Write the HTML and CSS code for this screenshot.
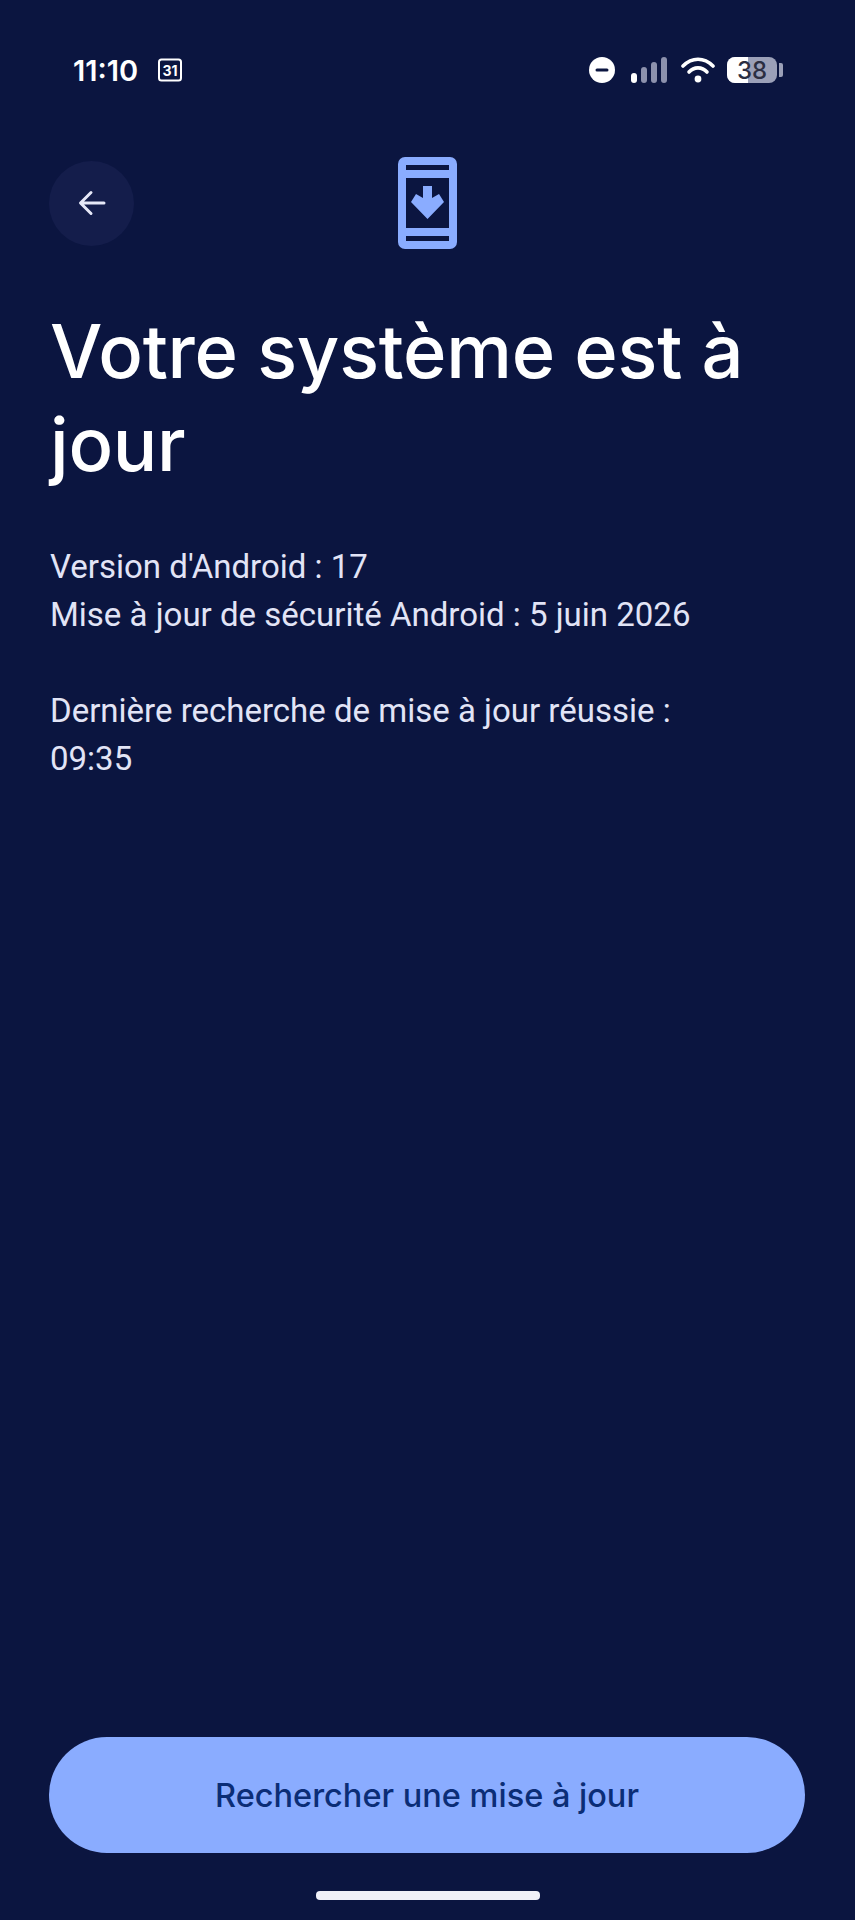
FILE: index.html
```html
<!DOCTYPE html>
<html lang="fr">
<head>
    <title>Mise à jour du système</title>
    <link rel="stylesheet" href="styles.css">
</head>
<body>
    <div class="status-bar">
        <div class="status-left">
            <span class="clock">11:10</span>
            <svg class="calendar" width="26" height="26" viewBox="0 0 26 26">
                <rect x="2" y="2.500" width="22" height="21" rx="2.500" fill="none" stroke="#fff" stroke-width="2"/>
                <text x="13" y="18.500" text-anchor="middle" class="calendar-day">31</text>
            </svg>
        </div>
        <div class="status-right">
            <svg width="26" height="26" viewBox="0 0 26 26">
                <circle cx="13" cy="13" r="13" fill="#fff"/>
                <rect x="6.500" y="11.500" width="13" height="3" rx="1.500" fill="#0b1540"/>
            </svg>
            <svg class="signal" width="38" height="26" viewBox="0 0 38 26">
                <rect x="0" y="16" width="6" height="10" rx="3" fill="#fff"/>
                <rect x="10" y="10" width="6" height="16" rx="3" fill="#8c91ad"/>
                <rect x="20" y="5" width="6" height="21" rx="3" fill="#8c91ad"/>
                <rect x="30" y="0" width="6" height="26" rx="3" fill="#8c91ad"/>
            </svg>
            <svg class="wifi" width="34" height="26" viewBox="0 0 34 26">
                <path d="M2 9 C11 0 23 0 32 9" fill="none" stroke="#fff" stroke-width="3.600" stroke-linecap="round"/>
                <path d="M8 15 C13 9.500 21 9.500 26 15" fill="none" stroke="#fff" stroke-width="3.600" stroke-linecap="round"/>
                <circle cx="17" cy="22" r="3.400" fill="#fff"/>
            </svg>
            <div class="battery">
                <div class="battery-body">
                    <div class="battery-level"></div>
                    <span>38</span>
                </div>
                <div class="battery-cap"></div>
            </div>
        </div>
    </div>

    <div class="header">
        <button class="back-button">
            <svg width="32" height="32" viewBox="0 0 32 32">
                <path d="M28 16 H5 M15 5.500 L4.500 16 L15 26.500" fill="none" stroke="#e6e8f8" stroke-width="3" stroke-linecap="round" stroke-linejoin="round"/>
            </svg>
        </button>
        <svg class="update-icon" width="59" height="92" viewBox="0 0 59 92">
            <rect width="59" height="92" rx="7" fill="#8aacff"/>
            <rect x="8" y="8" width="43" height="5" fill="#0b1540"/>
            <rect x="8" y="21" width="43" height="50" fill="#0b1540"/>
            <rect x="8" y="79" width="43" height="5" fill="#0b1540"/>
            <path d="M25 29 H34 V41 L41 37 L46 45 L29.500 62 L13 45 L18 37 L25 41 Z" fill="#8aacff"/>
        </svg>
    </div>

    <h1 class="title">Votre système est à jour</h1>

    <div class="info">
        <p>Version d'Android : 17<br>Mise à jour de sécurité Android : 5 juin 2026</p>
        <p>Dernière recherche de mise à jour réussie :<br>09:35</p>
    </div>

    <div class="footer">
        <button class="check-button">Rechercher une mise à jour</button>
    </div>
    <div class="home-indicator"></div>
</body>
</html>
```

FILE: styles.css
```css
html, body {
    height: 100%;
}
body {
    margin: 0;
    background: #0b1540;
    color: #fff;
    font-family: Roboto, Arial, sans-serif;
    display: flex;
    flex-direction: column;
    box-sizing: border-box;
    overflow: hidden;
}
.status-bar {
    display: flex;
    align-items: center;
    justify-content: space-between;
    height: 26px;
    padding: 57px 72px 0 73px;
}
.status-left, .status-right {
    display: flex;
    align-items: center;
}
.clock {
    font-family: Inter, sans-serif;
    font-weight: 600;
    font-size: 29px;
}
.calendar {
    margin-left: 19px;
}
.calendar-day {
    font-family: Inter, sans-serif;
    font-size: 14px;
    font-weight: 700;
    fill: #fff;
}
.signal {
    margin-left: 16px;
}
.wifi {
    margin-left: 12px;
}
.battery {
    display: flex;
    align-items: center;
    margin-left: 12px;
}
.battery-body {
    position: relative;
    width: 50px;
    height: 26px;
    border-radius: 8px;
    background: #9ba0b8;
    overflow: hidden;
    display: flex;
    align-items: center;
    justify-content: center;
}
.battery-level {
    position: absolute;
    top: 0;
    bottom: 0;
    left: 0;
    width: 21px;
    background: #fff;
}
.battery-body span {
    position: relative;
    font-family: Inter, sans-serif;
    font-size: 24px;
    font-weight: 500;
    color: #2b2e42;
}
.battery-cap {
    width: 4px;
    height: 14px;
    margin-left: 2px;
    border-radius: 0 2px 2px 0;
    background: #9ba0b8;
}
.header {
    display: flex;
    align-items: center;
    margin-top: 74px;
    padding-left: 49px;
}
.back-button {
    width: 85px;
    height: 85px;
    padding: 0;
    border: none;
    border-radius: 50%;
    background: #141d4b;
    display: flex;
    align-items: center;
    justify-content: center;
}
.update-icon {
    margin-left: 264px;
}
.title {
    margin: 56px 50px 0 50px;
    font-family: Inter, sans-serif;
    font-weight: 500;
    font-size: 74px;
    line-height: 93px;
    letter-spacing: -0.25px;
}
.info {
    margin: 52px 50px 0 50px;
    color: #e2e4f6;
    font-size: 33px;
    line-height: 48px;
}
.info p {
    margin: 0 0 48px 0;
}
.footer {
    margin-top: auto;
    padding: 0 50px 0 49px;
}
.check-button {
    width: 100%;
    height: 116px;
    border: none;
    border-radius: 58px;
    background: #8aacff;
    color: #0b2d76;
    font-family: Inter, sans-serif;
    font-size: 32.500px;
    font-weight: 500;
}
.home-indicator {
    width: 224px;
    height: 9px;
    margin: 38px auto 20px auto;
    border-radius: 4px;
    background: #f0f0f8;
}
```
